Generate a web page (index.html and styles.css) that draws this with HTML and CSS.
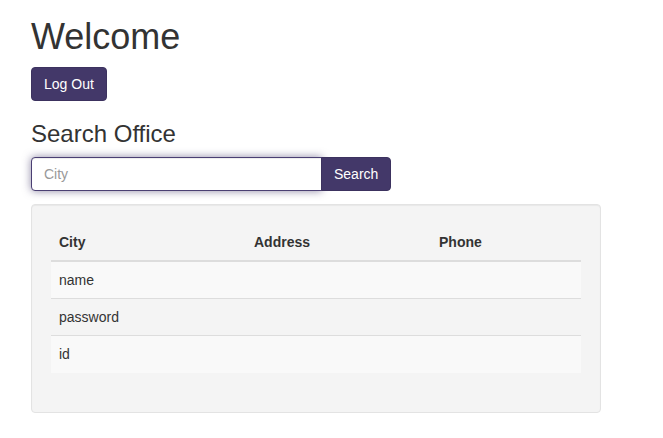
FILE: index.html
```html
<!DOCTYPE html>
<html lang="en">

<head>
    <meta charset="UTF-8">
    <meta name="viewport" content="width=device-width, initial-scale=1.0">
    <title>Office Search</title>
    <link rel="stylesheet" href="styles.css">
</head>

<body>
    <div class="container">
        <h1 class="title">Welcome</h1>
        <button class="btn">Log Out</button>

        <h3 class="subtitle">Search Office</h3>
        <form class="search-form">
            <input class="search-input" type="text" placeholder="City">
            <button class="btn btn-search" type="button">Search</button>
        </form>

        <div class="well">
            <table class="table">
                <thead>
                    <tr>
                        <th class="col-city">City</th>
                        <th class="col-address">Address</th>
                        <th>Phone</th>
                    </tr>
                </thead>
                <tbody>
                    <tr>
                        <td>name</td>
                        <td></td>
                        <td></td>
                    </tr>
                    <tr>
                        <td>password</td>
                        <td></td>
                        <td></td>
                    </tr>
                    <tr>
                        <td>id</td>
                        <td></td>
                        <td></td>
                    </tr>
                </tbody>
            </table>
        </div>
    </div>
</body>

</html>
```

FILE: styles.css
```css
* {
    margin: 0;
    padding: 0;
    box-sizing: border-box;
}

body {
    font-family: "Liberation Sans", Arial, sans-serif;
    font-size: 14px;
    line-height: 20px;
    color: #333;
    background-color: #fff;
}

.container {
    width: 570px;
    margin-left: 31px;
    padding-top: 17px;
}

.title {
    font-size: 36px;
    font-weight: normal;
    line-height: 40px;
    margin-bottom: 10px;
}

.btn {
    display: inline-block;
    height: 34px;
    padding: 6px 12px;
    font-family: inherit;
    font-size: 14px;
    line-height: 20px;
    color: #fff;
    background-color: #433869;
    border: 1px solid #3c325f;
    border-radius: 4px;
    cursor: pointer;
}

.subtitle {
    font-size: 24px;
    font-weight: normal;
    line-height: 26px;
    margin-top: 20px;
    margin-bottom: 10px;
}

.search-form {
    display: flex;
    width: 360px;
    margin-bottom: 13px;
}

.search-input {
    flex: 1;
    height: 34px;
    padding: 6px 12px;
    font-family: inherit;
    font-size: 14px;
    color: #555;
    border: 1px solid #4a3f73;
    border-radius: 4px 0 0 4px;
    box-shadow: inset 0 1px 1px rgba(0, 0, 0, .075), 0 0 8px rgba(67, 56, 105, .6);
    outline: none;
}

.search-input::placeholder {
    color: #999;
}

.btn-search {
    width: 70px;
    border-radius: 0 4px 4px 0;
    margin-left: -1px;
}

.well {
    padding: 19px;
    background-color: #f4f4f4;
    border: 1px solid #e3e3e3;
    border-radius: 4px;
    box-shadow: inset 0 1px 1px rgba(0, 0, 0, .05);
}

.table {
    width: 100%;
    border-collapse: collapse;
    margin-bottom: 20px;
}

.table th {
    text-align: left;
    font-weight: bold;
    padding: 8px;
    border-bottom: 2px solid #ddd;
}

.col-city {
    width: 195px;
}

.col-address {
    width: 185px;
}

.table td {
    padding: 8px;
    border-top: 1px solid #ddd;
    height: 37px;
}

.table tbody tr:nth-child(odd) {
    background-color: #f9f9f9;
}
```
